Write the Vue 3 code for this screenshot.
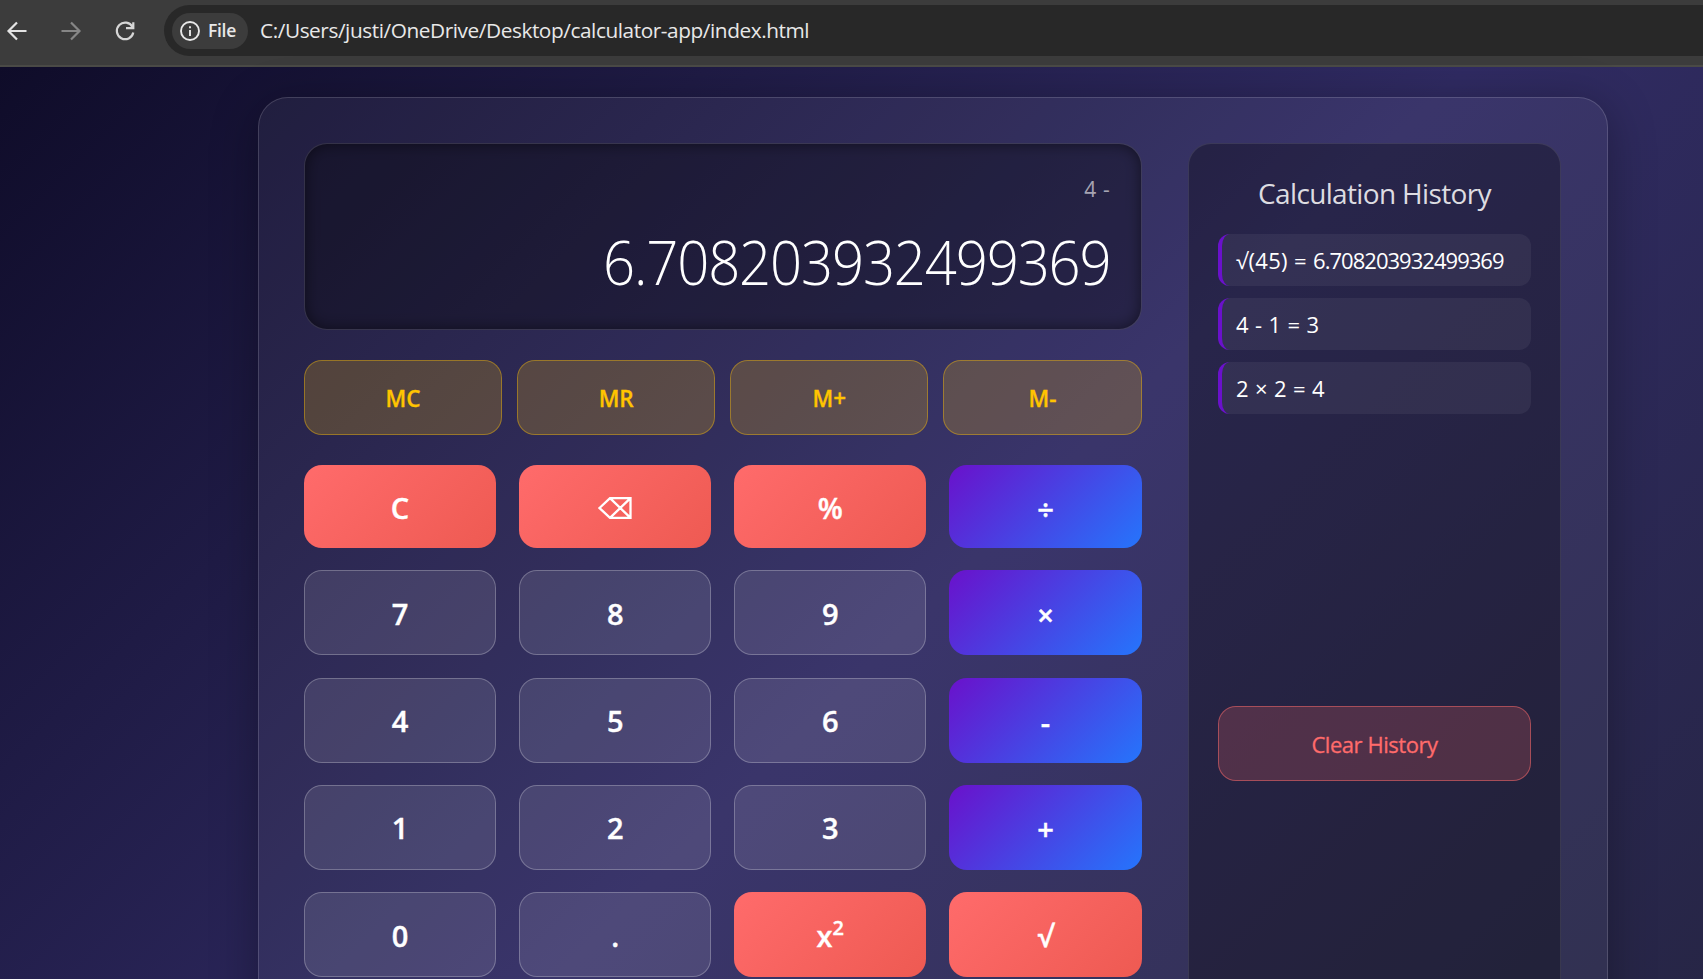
<script setup>
const memoryKeys = ['MC', 'MR', 'M+', 'M-']
const keys = [
  { label: 'C', kind: 'action' },
  { label: 'back', kind: 'action' },
  { label: '%', kind: 'action' },
  { label: '÷', kind: 'operator' },
  { label: '7' }, { label: '8' }, { label: '9' },
  { label: '×', kind: 'operator' },
  { label: '4' }, { label: '5' }, { label: '6' },
  { label: '-', kind: 'operator' },
  { label: '1' }, { label: '2' }, { label: '3' },
  { label: '+', kind: 'operator' },
  { label: '0' }, { label: '.' },
  { label: 'square', kind: 'action' },
  { label: '√', kind: 'action' },
]
const history = [
  { left: '√(45) =', result: '6.708203932499369' },
  { left: '4 - 1 =', result: '3' },
  { left: '2 × 2 =', result: '4' },
]
</script>

<template>
  <div class="window">
    <header class="toolbar">
      <svg class="nav" viewBox="0 0 24 24"><path d="M21.500 12H4M12 3.500 3.500 12l8.500 8.500" /></svg>
      <svg class="nav dim" viewBox="0 0 24 24"><path d="M2.500 12H20M12 3.500l8.500 8.500-8.500 8.500" /></svg>
      <svg class="nav reload" viewBox="0 0 24 24"><path d="M19.500 8A8.300 8.300 0 1 0 20.300 13.500M20.300 3.200V9.200H13" /></svg>
      <div class="address">
        <div class="chip">
          <svg viewBox="0 0 20 20"><circle cx="10" cy="10" r="9" /><path d="M10 9v6M10 5.200v2" /></svg>
          <span class="file">File</span>
        </div>
        <span class="url">C:/Users/justi/OneDrive/Desktop/calculator-app/index.html</span>
      </div>
    </header>

    <main class="page">
      <div class="card">
        <section class="calculator">
          <div class="display">
            <div class="previous">4 -</div>
            <div class="current">6.708203932499369</div>
          </div>
          <div class="memory">
            <button v-for="m in memoryKeys" :key="m" class="mem">{{ m }}</button>
          </div>
          <div class="keys">
            <button v-for="k in keys" :key="k.label" class="key" :class="k.kind">
              <svg v-if="k.label === 'back'" class="back" viewBox="0 0 34 22">
                <path d="M1.500 11 12 1.200H32.500V20.800H12ZM12 1.200 32.500 20.800M32.500 1.200 12 20.800" />
              </svg>
              <span v-else-if="k.label === 'square'">x<sup>2</sup></span>
              <span v-else>{{ k.label }}</span>
            </button>
          </div>
        </section>

        <aside class="history">
          <h3>Calculation History</h3>
          <div class="list">
            <div v-for="h in history" :key="h.left" class="item">{{ h.left }} <span class="result">{{ h.result }}</span></div>
          </div>
          <button class="clear">Clear History</button>
        </aside>
      </div>
    </main>
  </div>
</template>

<style>
body { margin: 0; overflow: hidden; }
</style>

<style scoped>
* { box-sizing: border-box; }
.window {
  height: 979px;
  overflow: hidden;
  font-family: "Open Sans", "Noto Sans", sans-serif;
  color: #fff;
}
button { font-family: inherit; padding: 0; margin: 0; color: #fff; }
.toolbar {
  height: 67px;
  display: flex;
  align-items: flex-start;
  background: #3c3c3c;
  border-bottom: 2px solid #4a4a46;
  padding: 5px 0 0 5px;
}
.nav { width: 24px; height: 24px; margin: 14px 30px 0 0; fill: none; stroke: #e3e3e3; stroke-width: 2.200; }
.nav.dim { stroke: #868686; }
.nav.reload { margin-right: 27px; stroke: #d6d6d6; }
.address {
  flex: 1;
  height: 51px;
  border-radius: 26px 0 0 26px;
  background: #282828;
  display: flex;
  align-items: center;
  padding-left: 8px;
}
.chip {
  width: 76px;
  height: 36px;
  border-radius: 18px;
  background: #3c3c3c;
  display: flex;
  align-items: center;
  padding-left: 8px;
  gap: 8px;
}
.chip svg { width: 20px; height: 20px; fill: none; stroke: #e8e8e8; stroke-width: 1.900; }
.file { margin-top: -1px; font-size: 17.500px; font-weight: 600; line-height: 24px; letter-spacing: -0.300px; color: #e8e8e8; }
.url { margin: -2px 0 0 12px; font-size: 20.800px; line-height: 28px; letter-spacing: -0.430px; color: #e8e8e8; white-space: nowrap; }

.page {
  height: 1230px;
  padding: 30px 95px 30px 258px;
  background: linear-gradient(135deg, #0f0c29, #302b63, #24243e);
}
.card {
  height: 1160px;
  display: flex;
  justify-content: space-between;
  padding: 45px 46px 0 45px;
  border: 1px solid rgba(255, 255, 255, 0.15);
  border-radius: 30px;
  background: rgba(255, 255, 255, 0.05);
  box-shadow: 0 8px 48px rgba(0, 0, 0, 0.32);
}
.calculator { width: 837.500px; }
.display {
  height: 187px;
  border: 1px solid rgba(255, 255, 255, 0.12);
  border-radius: 23px;
  background: rgba(0, 0, 0, 0.3);
  box-shadow: inset 0 0 15px rgba(0, 0, 0, 0.5);
  padding: 31px 30px 0 0;
  text-align: right;
}
.previous { font-size: 21px; line-height: 28px; letter-spacing: 0.700px; color: rgba(255, 255, 255, 0.6); }
.current {
  margin-top: 17px;
  font-size: 61px;
  font-weight: 300;
  line-height: 84px;
  letter-spacing: -1.250px;
  white-space: nowrap;
  transform: scaleX(0.922);
  transform-origin: right center;
}
.memory { display: grid; grid-template-columns: repeat(4, 1fr); gap: 15px; margin-top: 30px; }
.mem {
  height: 75px;
  border: 1px solid rgba(255, 193, 7, 0.4);
  border-radius: 18px;
  background: rgba(255, 193, 7, 0.2);
  color: #ffc400;
  padding-top: 1px;
  font-size: 22.500px;
  font-weight: 600;
  -webkit-text-stroke: 0.300px #ffc400;
}
.keys {
  display: grid;
  grid-template-columns: repeat(4, 1fr);
  grid-template-rows: 83px repeat(4, 85px);
  gap: 22.300px 23px;
  margin-top: 30px;
}
.key {
  border: 1px solid rgba(255, 255, 255, 0.25);
  border-radius: 18px;
  background: rgba(255, 255, 255, 0.1);
  padding-top: 2px;
  font-size: 29px;
  font-weight: 600;
  line-height: 40px;
  -webkit-text-stroke: 0.400px #fff;
}
.key.action { border: 0; background: linear-gradient(135deg, #ff6b6b, #ee5a52); }
.key.operator { border: 0; padding-top: 4px; background: linear-gradient(135deg, #6a11cb, #2575fc); }
.back { display: block; width: 34px; height: 22px; margin: 0 auto; fill: none; stroke: #fff; stroke-width: 2.300; }
sup { font-size: 20px; line-height: 0; vertical-align: 12px; }

.history {
  width: 373px;
  border: 1px solid rgba(255, 255, 255, 0.1);
  border-radius: 23px;
  background: rgba(0, 0, 0, 0.3);
  padding: 30px 29px;
}
h3 { margin: 0; height: 60px; line-height: 38px; text-align: center; font-size: 28px; font-weight: 400; letter-spacing: -0.650px; color: rgba(255, 255, 255, 0.85); white-space: nowrap; }
.list { height: 472px; display: flex; flex-direction: column; gap: 12px; }
.item {
  height: 52px;
  border-left: 4px solid #6a11cb;
  border-radius: 12px;
  background: rgba(255, 255, 255, 0.06);
  padding-left: 14px;
  font-size: 22px;
  line-height: 52px;
  letter-spacing: 0.350px;
  white-space: nowrap;
}
.result { letter-spacing: -0.970px; }
.clear {
  width: 100%;
  height: 75px;
  border: 1px solid rgba(255, 107, 107, 0.5);
  border-radius: 18px;
  background: rgba(255, 107, 107, 0.2);
  color: #ff6b6b;
  font-size: 22px;
  font-weight: 500;
  letter-spacing: -0.450px;
  -webkit-text-stroke: 0.300px #ff6b6b;
}
</style>
